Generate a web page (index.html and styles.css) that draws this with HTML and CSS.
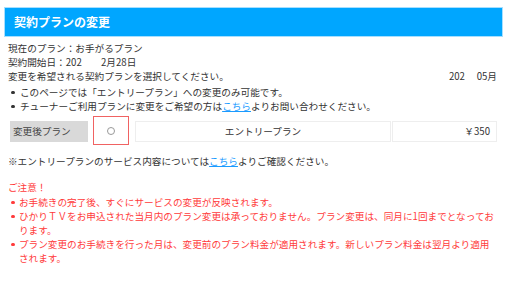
FILE: index.html
```html
<!DOCTYPE html>
<html lang="ja">
<head>
<meta charset="utf-8">
<link rel="stylesheet" href="styles.css">
</head>
<body>
<div class="header"><h1 class="title">契約プランの変更</h1></div>
<div class="content">
  <p class="line">現在のプラン：お手がるプラン</p>
  <p class="line">契約開始日：202　　2月28日</p>
  <div class="line row-between"><span>変更を希望される契約プランを選択してください。</span><span>202　 05月</span></div>
  <ul class="list">
    <li>このページでは「エントリープラン」への変更のみ可能です。</li>
    <li>チューナーご利用プランに変更をご希望の方は<a href="#" class="link">こちら</a>よりお問い合わせください。</li>
  </ul>
  <div class="plan-row">
    <div class="plan-label">変更後プラン</div>
    <div class="plan-radio"><span class="radio"></span></div>
    <div class="plan-name">エントリープラン</div>
    <div class="plan-price">￥350</div>
  </div>
  <p class="line note">※エントリープランのサービス内容については<a href="#" class="link">こちら</a>よりご確認ください。</p>
  <p class="line caution">ご注意！</p>
  <ul class="list red-list">
    <li>お手続きの完了後、すぐにサービスの変更が反映されます。</li>
    <li>ひかりＴＶをお申込された当月内のプラン変更は承っておりません。プラン変更は、同月に1回までとなっております。</li>
    <li>プラン変更のお手続きを行った月は、変更前のプラン料金が適用されます。新しいプラン料金は翌月より適用されます。</li>
  </ul>
</div>
</body>
</html>
```
FILE: styles.css
```css
html, body {
  margin: 0;
  padding: 0;
  background: #fff;
}
body {
  font-family: "Noto Sans CJK JP", "Noto Sans", sans-serif;
  font-size: 9.65px;
  color: #333;
  width: 511px;
}
.header {
  margin: 7px 8px 0 4px;
  height: 28px;
  background: #00a6ff;
  border: 1px solid #a6dfff;
  display: flex;
  align-items: center;
}
.title {
  margin: 0 0 0 9px;
  font-size: 12px;
  font-weight: bold;
  color: #fff;
  line-height: 1;
}
.content {
  padding: 4px 12px 0 8px;
}
.line {
  margin: 0;
  line-height: 14px;
  height: 14px;
  white-space: nowrap;
}
.row-between {
  display: flex;
  justify-content: space-between;
  padding-right: 2px;
}
.list {
  list-style: none;
  margin: 2px 0 0 0;
  padding: 0 0 0 12px;
}
.list li {
  position: relative;
  line-height: 14px;
}
.list li::before {
  content: "";
  position: absolute;
  left: -9px;
  top: 5.5px;
  width: 3.5px;
  height: 3.5px;
  border-radius: 50%;
  background: #333;
}
.link {
  color: #1a9bff;
  text-decoration: underline;
}
.plan-row {
  display: flex;
  align-items: flex-start;
  margin: 3px 0 0 2px;
  height: 29px;
}
.plan-label {
  margin-top: 5px;
  width: 75px;
  height: 21px;
  line-height: 21px;
  padding-left: 3px;
  background: #d9d9d9;
  color: #444;
}
.plan-radio {
  margin-left: 5px;
  width: 34px;
  height: 27px;
  border: 1px solid #f06262;
  display: flex;
  align-items: center;
  justify-content: center;
}
.radio {
  width: 6px;
  height: 6px;
  border: 1px solid #999;
  border-radius: 50%;
}
.plan-name {
  margin: 5px 0 0 6px;
  width: 254px;
  height: 19px;
  line-height: 19px;
  border: 1px solid #eee;
  text-align: center;
}
.plan-price {
  margin: 5px 0 0 1px;
  width: 97px;
  height: 19px;
  line-height: 19px;
  border: 1px solid #eee;
  text-align: right;
  padding-right: 6px;
}
.note {
  margin-top: 9px;
}
.caution {
  margin-top: 12px;
  color: #ff3b3b;
}
.red-list {
  margin-top: 1px;
  padding-left: 11px;
  color: #ff3b3b;
}
.red-list li::before {
  background: #ff3b3b;
  left: -8px;
}
```
